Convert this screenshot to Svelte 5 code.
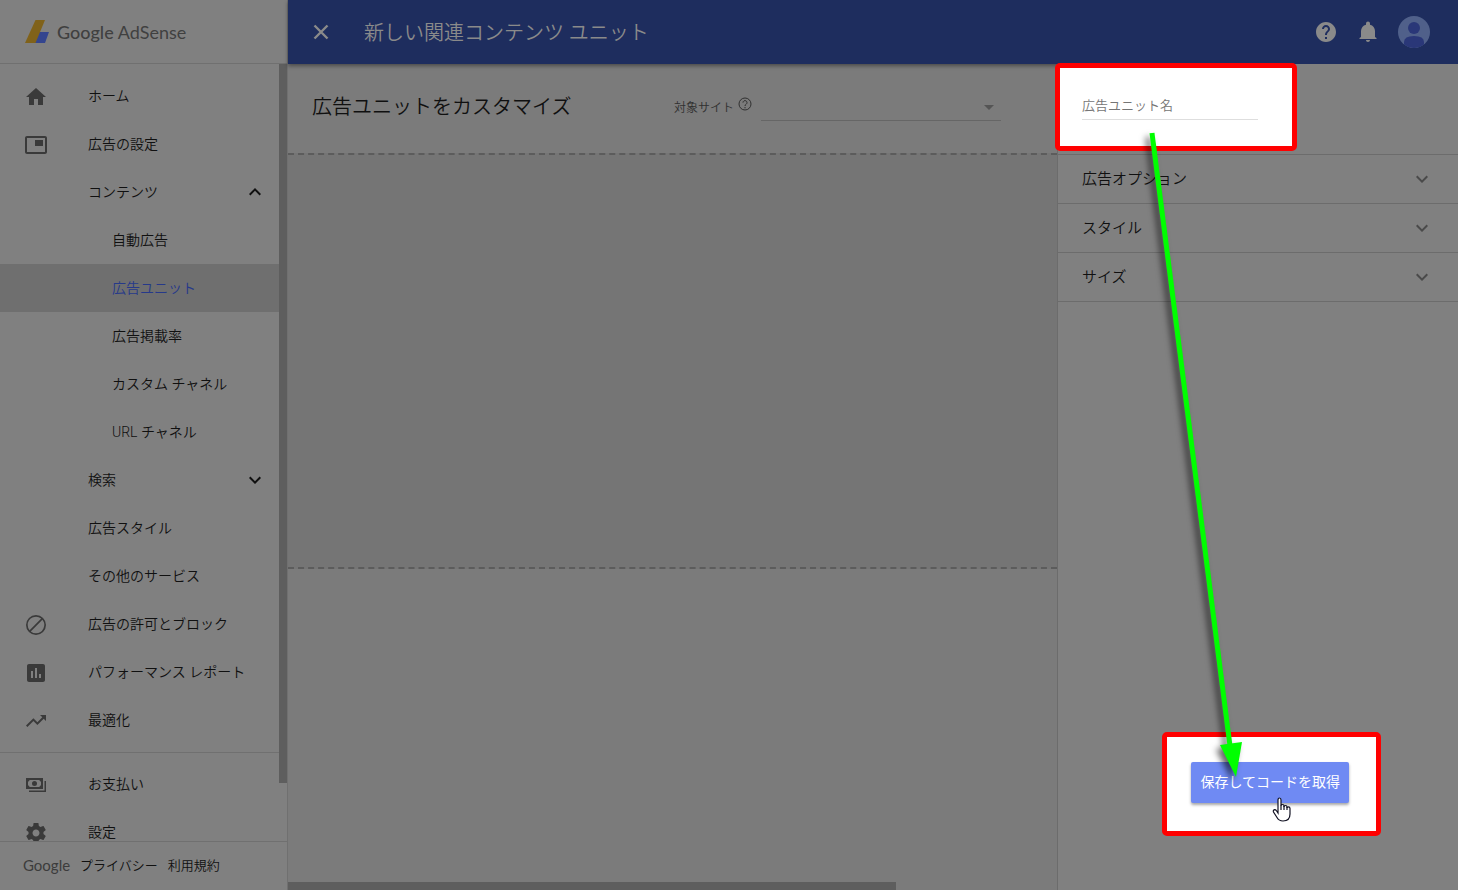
<script>
  const icons = {
    home: 'M10 20v-6h4v6h5v-8h3L12 3 2 12h3v8z',
    ads: 'M19 7h-8v6h8V7zm2-4H3c-1.100 0-2 .9-2 2v14c0 1.100.9 2 2 2h18c1.100 0 2-.9 2-2V5c0-1.100-.9-2-2-2zm0 16H3V5h18v14z',
    block: 'M12 2a10 10 0 1 0 0 20 10 10 0 0 0 0-20zM3.700 12A8.300 8.300 0 0 1 17.200 5.600L5.600 17.200A8.200 8.200 0 0 1 3.700 12zm8.300 8.300a8.200 8.200 0 0 1-5.200-1.900L18.400 6.800A8.300 8.300 0 0 1 12 20.300z',
    report: 'M19 3H5c-1.100 0-2 .9-2 2v14c0 1.100.9 2 2 2h14c1.100 0 2-.9 2-2V5c0-1.100-.9-2-2-2zM9 17H7v-7h2v7zm4 0h-2V7h2v10zm4 0h-2v-4h2v4z',
    trend: 'M16 6l2.290 2.290-4.880 4.880-4-4L2 16.590 3.410 18l6-6 4 4 6.300-6.290L22 12V6z',
    payments: 'M2 5v11h17V5H2zm15 7.500c-.8 0-1.500.7-1.500 1.500h-10c0-.8-.7-1.500-1.500-1.500v-4c.8 0 1.500-.7 1.500-1.500h10c0 .8.7 1.500 1.500 1.500v4zM10.500 8a2.500 2.500 0 1 0 0 5 2.500 2.500 0 0 0 0-5zM20.500 8v9.500H5V19h17V8z',
    settings: 'M19.430 12.980c.04-.32.07-.64.07-.98s-.03-.66-.07-.98l2.110-1.650c.19-.15.24-.42.12-.64l-2-3.460c-.12-.22-.39-.3-.61-.22l-2.490 1c-.52-.4-1.080-.73-1.690-.98l-.38-2.650C14.460 2.180 14.250 2 14 2h-4c-.25 0-.46.18-.49.42l-.38 2.650c-.61.25-1.170.59-1.690.98l-2.490-1c-.23-.09-.49 0-.61.22l-2 3.460c-.13.22-.07.49.12.64l2.110 1.650c-.04.32-.07.65-.07.98s.03.66.07.98l-2.110 1.650c-.19.15-.24.42-.12.64l2 3.460c.12.22.39.3.61.22l2.490-1c.52.4 1.080.73 1.690.98l.38 2.650c.03.24.24.42.49.42h4c.25 0 .46-.18.49-.42l.38-2.650c.61-.25 1.170-.59 1.690-.98l2.490 1c.23.09.49 0 .61-.22l2-3.460c.12-.22.07-.49-.12-.64l-2.110-1.650zM12 15.500c-1.930 0-3.500-1.570-3.500-3.500s1.570-3.500 3.500-3.500 3.500 1.570 3.500 3.500-1.570 3.500-3.500 3.500z',
    less: 'M12 8l-6 6 1.410 1.410L12 10.830l4.590 4.580L18 14z',
    more: 'M16.590 8.590L12 13.170 7.410 8.590 6 10l6 6 6-6z'
  };

  const menu = [
    { label: 'ホーム', icon: 'home' },
    { label: '広告の設定', icon: 'ads' },
    { label: 'コンテンツ', toggle: 'less' },
    { label: '自動広告', sub: true },
    { label: '広告ユニット', sub: true },
    { label: '広告掲載率', sub: true },
    { label: 'カスタム チャネル', sub: true },
    { label: 'URL チャネル', sub: true },
    { label: '検索', toggle: 'more' },
    { label: '広告スタイル' },
    { label: 'その他のサービス' },
    { label: '広告の許可とブロック', icon: 'block' },
    { label: 'パフォーマンス レポート', icon: 'report' },
    { label: '最適化', icon: 'trend' },
    { label: 'お支払い', icon: 'payments', divider: true },
    { label: '設定', icon: 'settings' }
  ];

  const sections = ['広告オプション', 'スタイル', 'サイズ'];

  let current = $state('広告ユニット');
  let unitName = $state('');
</script>

<div class="app">
  <aside class="sidebar">
    <a class="brand" href="#home">
      <svg class="brand-mark" viewBox="0 0 24 24">
        <path d="M14 12h10l-4 11H9z" fill="#34458f" />
        <path d="M10.500 0H20L10.500 23H0z" fill="#80621a" />
      </svg>
      <span class="brand-name"><b>Google</b> AdSense</span>
    </a>

    <div class="menu-area">
      <nav class="menu">
        {#each menu as item}
          {#if item.divider}
            <hr />
          {/if}
          <a
            href="#{item.label}"
            class="item"
            class:sub={item.sub}
            class:active={item.label === current}
            onclick={() => (current = item.label)}
          >
            <span class="item-icon">
              {#if item.icon}
                <svg viewBox="0 0 24 24"><path d={icons[item.icon]} /></svg>
              {/if}
            </span>
            <span class="item-label">{item.label}</span>
            {#if item.toggle}
              <svg class="toggle" viewBox="0 0 24 24"><path d={icons[item.toggle]} /></svg>
            {/if}
          </a>
        {/each}
      </nav>
      <div class="thumb"></div>
    </div>

    <footer class="legal">
      <span class="legal-logo">Google</span>
      <a href="#privacy">プライバシー</a>
      <a href="#terms">利用規約</a>
    </footer>
  </aside>

  <div class="page">
    <header class="topbar">
      <button class="icon-button" aria-label="閉じる">
        <svg viewBox="0 0 24 24"><path d="M5.500 5.500l13 13M18.500 5.500l-13 13" fill="none" stroke="currentColor" stroke-width="2.400" /></svg>
      </button>
      <h1>新しい関連コンテンツ ユニット</h1>
      <div class="actions">
        <button class="icon-button" aria-label="ヘルプ">
          <svg viewBox="0 0 24 24"><path d="M12 2C6.480 2 2 6.480 2 12s4.480 10 10 10 10-4.480 10-10S17.520 2 12 2zm1 17h-2v-2h2v2zm2.070-7.750l-.9.920C13.450 12.900 13 13.500 13 15h-2v-.5c0-1.100.45-2.100 1.170-2.830l1.240-1.260c.37-.36.59-.86.59-1.410 0-1.100-.9-2-2-2s-2 .9-2 2H8c0-2.210 1.790-4 4-4s4 1.790 4 4c0 .88-.36 1.680-.93 2.250z" /></svg>
        </button>
        <button class="icon-button" aria-label="通知">
          <svg viewBox="0 0 24 24"><path d="M12 22c1.100 0 2-.9 2-2h-4c0 1.100.89 2 2 2zm7-5v-6c0-3.070-2-5.640-5-6.320V3.500a1.500 1.500 0 0 0-4 0v1.180C7 5.360 5 7.920 5 11v6l-1.500 1v1h17v-1z" /></svg>
        </button>
        <button class="avatar" aria-label="アカウント">
          <svg viewBox="0 0 32 32">
            <circle cx="16" cy="16" r="16" fill="#50608a" />
            <circle cx="16" cy="12" r="6" fill="#2a3778" />
            <path d="M6 28.500V26q0-6 10-6t10 6v2.500a16 16 0 0 1-20 0z" fill="#2a3778" />
          </svg>
        </button>
      </div>
    </header>

    <div class="body">
      <main class="editor">
        <div class="editor-head">
          <h2>広告ユニットをカスタマイズ</h2>
          <div class="site">
            <label for="site">対象サイト</label>
            <svg class="hint" viewBox="0 0 14 14">
              <circle cx="7" cy="7" r="6" />
              <path d="M5 5.600a2 2 0 1 1 3.200 1.600C7.400 7.800 7 8 7 9M7 10v1.300" />
            </svg>
            <div class="select">
              <select id="site"><option></option></select>
            </div>
          </div>
        </div>
        <div class="preview"></div>
        <div class="h-thumb"></div>
      </main>

      <section class="options">
        <div class="name">
          <div class="spot spot-name">
            <input aria-label="広告ユニット名" placeholder="広告ユニット名" bind:value={unitName} />
          </div>
        </div>
        {#each sections as section}
          <button class="section">
            <span>{section}</span>
            <svg viewBox="0 0 24 24"><path d={icons.more} /></svg>
          </button>
        {/each}
        <div class="save">
          <div class="spot spot-save">
            <button class="save-button">保存してコードを取得</button>
          </div>
        </div>

        <!-- guide arrow from the name field to the save button -->
        <svg class="arrow" viewBox="0 0 400 826">
          <path d="M94 69L172 682" stroke="#00ff00" stroke-width="5" />
          <path d="M162 681L184 678L178 713z" fill="#00ff00" />
        </svg>
        <svg class="pointer" viewBox="0 0 20 26">
          <path d="M6 14V3q0-2 1.500-2T9 3v6q0-1.500 1.500-1.500T12 9v1q0-1.500 1.500-1.500T15 10v1q0-1.200 1.500-1.200T18 11.500V17q0 7-7 7-4 0-6-3.500L1.500 15Q.8 13 2.500 12.600q1.300 0 2 1.200L6 16z" fill="#fff" stroke="#111122" stroke-width="1.200" />
          <path d="M9 8.500V13M12 9v4M15 10v3" stroke="#111122" stroke-width="1.200" />
        </svg>
      </section>
    </div>
  </div>
</div>

<style>
  :global(body) {
    margin: 0;
    background: #808080;
  }

  .app {
    display: grid;
    grid-template-columns: 288px 1fr;
    height: 100vh;
    overflow: hidden;
    font-family: Roboto, "Noto Sans CJK JP", sans-serif;
    font-size: 14px;
    font-weight: 350;
    color: #101010;
  }

  .app * {
    box-sizing: border-box;
  }

  a {
    color: inherit;
    text-decoration: none;
  }

  button {
    padding: 0;
    border: 0;
    background: none;
    color: inherit;
    font: inherit;
    cursor: pointer;
  }

  svg {
    display: block;
    fill: currentColor;
  }

  /* sidebar */
  .sidebar {
    display: flex;
    flex-direction: column;
    min-height: 0;
    background: #808080;
    border-right: 1px solid #707070;
  }

  .brand {
    display: flex;
    flex: none;
    align-items: center;
    gap: 8px;
    height: 64px;
    padding-left: 25px;
    border-bottom: 1px solid #707070;
  }

  .brand-mark {
    width: 24px;
    height: 24px;
  }

  .brand-name {
    font-family: Lato, sans-serif;
    font-size: 18px;
    font-weight: 400;
    color: #404040;
  }

  .brand-name b {
    font-weight: 500;
  }

  .menu-area {
    display: flex;
    flex: 1;
    min-height: 0;
    overflow: hidden;
  }

  .menu {
    flex: 1;
    padding-top: 8px;
  }

  .thumb {
    width: 8px;
    height: calc(100% - 58px);
    background: #5e5e5e;
  }

  .item {
    display: flex;
    align-items: center;
    height: 48px;
    padding: 0 12px 0 24px;
  }

  .item-icon {
    width: 64px;
    padding-top: 2px;
    color: #3a3a3a;
  }

  .item-icon svg,
  .toggle {
    width: 24px;
    height: 24px;
  }

  .item-label {
    flex: 1;
    padding-bottom: 2px;
  }

  .sub {
    padding-left: 48px;
  }

  .active {
    background: #6f6f6f;
    color: #26398a;
  }

  hr {
    height: 1px;
    margin: 8px 0 7px;
    border: 0;
    background: #707070;
  }

  .legal {
    display: flex;
    flex: none;
    align-items: center;
    gap: 10px;
    height: 49px;
    padding: 0 0 3px 23px;
    border-top: 1px solid #707070;
    font-size: 13px;
  }

  .legal-logo {
    font-family: Lato, sans-serif;
    font-size: 15px;
    font-weight: 400;
    color: #3c3c3c;
  }

  /* top bar */
  .page {
    display: flex;
    flex-direction: column;
    min-width: 0;
  }

  .topbar {
    position: relative;
    display: flex;
    flex: none;
    align-items: center;
    gap: 31px;
    height: 64px;
    padding: 0 28px 0 21px;
    background: #1e2d5e;
    box-shadow: 0 2px 4px rgba(0, 0, 0, 0.4);
    color: #8a8a8a;
  }

  h1,
  h2 {
    margin: 0;
    padding-bottom: 2px;
    font-size: 20px;
    font-weight: 350;
  }

  .icon-button,
  .icon-button svg {
    width: 24px;
    height: 24px;
  }

  .actions {
    display: flex;
    align-items: center;
    gap: 18px;
    margin-left: auto;
  }

  .avatar,
  .avatar svg {
    width: 32px;
    height: 32px;
  }

  .body {
    display: grid;
    flex: 1;
    grid-template-columns: 1fr 401px;
    min-height: 0;
  }

  /* editor */
  .editor {
    display: flex;
    flex-direction: column;
    background: #7b7b7b;
  }

  .editor-head {
    display: flex;
    align-items: center;
    justify-content: space-between;
    height: 89px;
    padding: 0 56px 4px 24px;
  }

  .site {
    display: flex;
    align-items: center;
    font-size: 12px;
    color: #303030;
  }

  .hint {
    width: 14px;
    height: 14px;
    margin: 0 9px 5px 4px;
    fill: none;
    stroke: currentColor;
  }

  .select {
    position: relative;
  }

  .select::after {
    content: "";
    position: absolute;
    top: 12px;
    right: 7px;
    border: 5px solid transparent;
    border-top-color: #555;
    border-bottom: 0;
  }

  select {
    width: 240px;
    height: 28px;
    border: 0;
    border-bottom: 1px solid #666;
    border-radius: 0;
    appearance: none;
    background: none;
    font: inherit;
  }

  .preview {
    height: 416px;
    border: 2px dashed #5c5c5c;
    border-width: 2px 0;
    background: #757575;
  }

  .h-thumb {
    width: 79%;
    height: 8px;
    margin-top: auto;
    background: #5e5e5e;
  }

  /* options */
  .options {
    position: relative;
    display: flex;
    flex-direction: column;
    border-left: 1px solid #6c6c6c;
    background: #808080;
  }

  .name {
    display: flex;
    align-items: center;
    height: 91px;
    padding: 0 24px 7px;
    border-bottom: 1px solid #6c6c6c;
  }

  .spot {
    position: relative;
    z-index: 0;
  }

  .spot::before {
    content: "";
    position: absolute;
    z-index: -1;
    border: 5px solid #f00;
    border-radius: 5px;
    background: #fff;
  }

  .spot-name::before {
    inset: -29px -39px -31px -27px;
  }

  .spot-save::before {
    inset: -30px -32px -33px -29px;
  }

  input {
    display: block;
    width: 176px;
    height: 28px;
    padding: 0;
    border: 0;
    border-bottom: 1px solid #dedede;
    outline: 0;
    background: none;
    font: inherit;
    font-size: 13px;
  }

  input::placeholder {
    color: #757575;
    opacity: 1;
  }

  .section {
    display: flex;
    align-items: center;
    justify-content: space-between;
    height: 49px;
    padding: 0 24px;
    border-bottom: 1px solid #6c6c6c;
    font-size: 15px;
  }

  .section span {
    padding-bottom: 4px;
  }

  .section svg {
    width: 24px;
    height: 24px;
    color: #4a4a4a;
  }

  .save {
    display: flex;
    justify-content: flex-end;
    margin-top: auto;
    padding: 0 109px 87px 0;
  }

  .save-button {
    display: block;
    height: 41px;
    padding: 0 9px 4px;
    border-radius: 2px;
    background: #6f8af3;
    box-shadow: 0 2px 3px rgba(0, 0, 0, 0.35);
    color: #fff;
    font-weight: 400;
  }

  .arrow {
    position: absolute;
    top: 0;
    left: 0;
    width: 400px;
    height: 826px;
    filter: drop-shadow(-4px 4px 3px rgba(0, 0, 0, 0.6));
    pointer-events: none;
  }

  .pointer {
    position: absolute;
    right: 166px;
    bottom: 67px;
    width: 20px;
    height: 26px;
    pointer-events: none;
  }
</style>
